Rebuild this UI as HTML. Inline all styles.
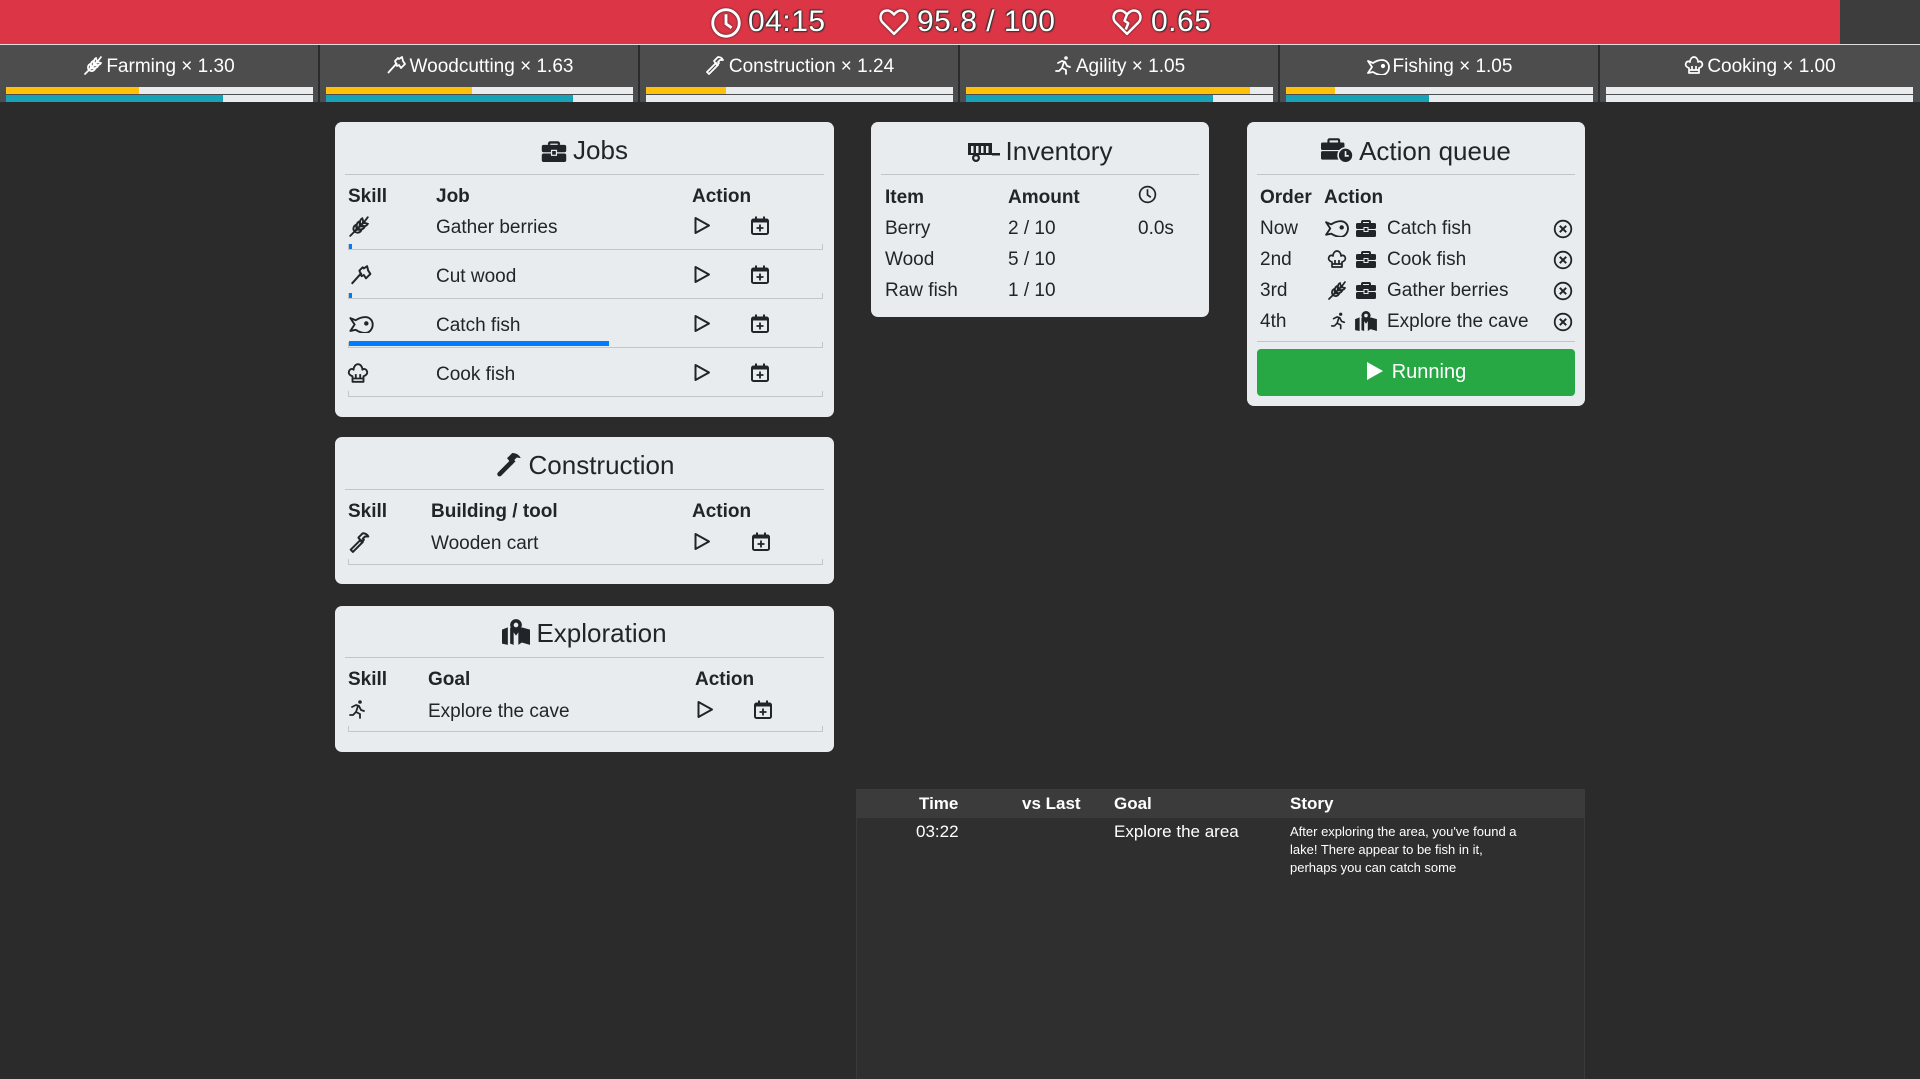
<!DOCTYPE html>
<html><head><meta charset="utf-8">
<style>
*{box-sizing:border-box;margin:0;padding:0}
body{width:1920px;height:1079px;background:#2b2b2b;font-family:"Liberation Sans",sans-serif;color:#212529;position:relative;overflow:hidden}
.abs{position:absolute}
#top{left:0;top:0;width:1840px;height:44px;background:#dc3545}
#topr{left:1840px;top:0;width:80px;height:44px;background:#3d3d3d}
.tt{position:absolute;top:5px;font-size:30px;letter-spacing:0.5px;color:#fff;line-height:34px;text-shadow:0 0 2px #333,1px 1px 1px #333,-1px -1px 1px #333;white-space:nowrap}
.tab{position:absolute;top:45px;width:318px;height:57px;background:#4d4d4d}
.tab .lbl{position:absolute;left:0;right:0;top:10px;text-align:center;color:#fff;font-size:19px;line-height:24px;white-space:nowrap}
.tab .lbl svg{vertical-align:-3px;margin-right:3px}
.bar{position:absolute;left:6px;width:307px;height:7px;background:#e9ecef}
.bar i{position:absolute;left:0;top:0;height:7px}
.card{position:absolute;background:#e9ecef;border-radius:7px}
.ct{position:absolute;left:0;right:0;text-align:center;font-size:26px;line-height:30px;white-space:nowrap}
.ct svg{vertical-align:-3px;margin-right:6px}
.sep{position:absolute;left:10px;right:10px;height:1px;background:#c3c6c9}
.t{position:absolute;font-size:19px;line-height:22px;white-space:nowrap}
.b{font-weight:bold}
.rl{position:absolute;height:6px;border:1px solid #c3c6c9;border-top:none}
.pb{position:absolute;height:5px;background:#007bff}
svg.i{position:absolute}
</style></head><body>
<svg width="0" height="0" style="position:absolute">
<defs>
<symbol id="play" viewBox="0 0 20 20"><path d="M3.5 2.5 L17 10 L3.5 17.5 Z" fill="none" stroke="#212529" stroke-width="2" stroke-linejoin="round"/></symbol>
<symbol id="cal" viewBox="0 0 20 20"><rect x="2" y="4" width="16" height="14.5" rx="1.5" fill="none" stroke="#212529" stroke-width="2"/><rect x="2" y="4" width="16" height="3" fill="#212529"/><rect x="5" y="1" width="2" height="4" fill="#212529"/><rect x="13" y="1" width="2" height="4" fill="#212529"/><path d="M10 9v7M6.5 12.5h7" stroke="#212529" stroke-width="1.8"/></symbol>
<symbol id="wheat" viewBox="0 0 20 20" fill="none" stroke="currentColor" stroke-width="1.7" stroke-linecap="round"><path d="M2 19L15 6"/><path d="M6 15c-2-2-1-5 1-6 1 2 1 5-1 6zM6 15c2 2 5 1 6-1-2-1-5-1-6 1zM9 12c-2-2-1-5 1-6 1 2 1 5-1 6zM9 12c2 2 5 1 6-1-2-1-5-1-6 1zM12 9c-2-2-1-5 1-6 1 2 1 5-1 6zM12 9c2 2 5 1 6-1-2-1-5-1-6 1zM15 6l3-4"/></symbol>
<symbol id="axe" viewBox="0 0 20 20" fill="none" stroke="currentColor" stroke-width="1.8" stroke-linejoin="round"><path d="M2 18L11 8"/><path d="M9 6l3-3 1 1 3-2 1 4 2 3-4 4-2-3-2 1z"/></symbol>
<symbol id="hammer" viewBox="0 0 20 20" fill="none" stroke="currentColor" stroke-width="1.8" stroke-linejoin="round"><path d="M2 17l9-9 2 2-9 9z"/><path d="M9 6l4-4c2 0 4 1 5 3l-3 0-2 2 1 1-2 2z"/></symbol>
<symbol id="hammerf" viewBox="0 0 20 20" fill="currentColor"><path d="M1.5 16.5l9-9 2.5 2.5-9 9c-.7.7-1.8.7-2.5 0s-.7-1.800 0-2.5z"/><path d="M8.5 5.5l4-4c3 0 5.5 1.5 6.5 4l-3 -.5-2 2 1 1-2.5 2.5z"/></symbol>
<symbol id="run" viewBox="0 0 20 20" fill="none" stroke="currentColor" stroke-width="1.8" stroke-linecap="round" stroke-linejoin="round"><circle cx="13" cy="3" r="1.8" fill="currentColor" stroke="none"/><path d="M5 8l4-2 3 1 2 4 3 1"/><path d="M11 7l-2 6 4 2 0 4"/><path d="M9 13l-3 3H3"/></symbol>
<symbol id="fish" viewBox="0 0 24 16" fill="none" stroke="currentColor" stroke-width="1.8" stroke-linejoin="round"><path d="M2 2l4 6-4 6 5-1c3 2 6 3 9 3 4 0 7-4 7-8s-3-7-7-7c-3 0-6 1-9 3z"/><circle cx="17" cy="7" r="1.2" fill="currentColor"/></symbol>
<symbol id="chef" viewBox="0 0 20 20" fill="none" stroke="currentColor" stroke-width="1.7" stroke-linejoin="round"><path d="M5 13c-3-1-4-3-3-5 1-2 3-2 4-1 0-3 2-5 4-5s4 2 4 5c1-1 3-1 4 1 1 2 0 4-3 5v5H5z"/><path d="M5 15h10M8 11v4M12 11v4"/></symbol>
<symbol id="brief" viewBox="0 0 20 18" fill="#212529"><path d="M7 1h6a2 2 0 0 1 2 2v1h-2V3H7v1H5V3a2 2 0 0 1 2-2z"/><rect x="0" y="4" width="20" height="6" rx="1.5"/><rect x="0" y="11" width="20" height="7" rx="1.5"/><rect x="8" y="8.5" width="4" height="4" fill="#212529" stroke="#e9ecef" stroke-width="1"/></symbol>
<symbol id="map" viewBox="0 0 24 22" fill="#212529"><path d="M0 9l5-2v15l-5 -1z"/><path d="M7 7l3 2v13l-3-1z"/><path d="M14 9l3-2 7 2v13l-7-2-3 2z"/><path d="M12 0a5 5 0 0 1 5 5c0 3-5 9-5 9s-5-6-5-9a5 5 0 0 1 5-5z"/><circle cx="12" cy="5" r="2" fill="#e9ecef"/></symbol>
<symbol id="cart" viewBox="0 0 32 22" fill="#212529"><path d="M0 2h24v12H0z"/><rect x="24" y="12" width="8" height="2.5"/><circle cx="8" cy="17" r="4" fill="#212529"/><circle cx="8" cy="17" r="1.8" fill="#e9ecef"/><rect x="3" y="5" width="2.5" height="7" fill="#e9ecef"/><rect x="8" y="5" width="2.5" height="7" fill="#e9ecef"/><rect x="13" y="5" width="2.5" height="7" fill="#e9ecef"/><rect x="18" y="5" width="2.5" height="7" fill="#e9ecef"/></symbol>
<symbol id="tbclock" viewBox="0 0 30 24" fill="#212529"><path d="M8 1h8a2 2 0 0 1 2 2v2h-2V3H8v2H6V3a2 2 0 0 1 2-2z"/><rect x="0" y="5" width="22" height="7" rx="1.5"/><rect x="0" y="13" width="18" height="8" rx="1.5"/><circle cx="23" cy="17" r="7" stroke="#e9ecef" stroke-width="1.5"/><path d="M23 13v4.5h3" stroke="#e9ecef" stroke-width="1.6" fill="none"/></symbol>
<symbol id="xc" viewBox="0 0 20 20" fill="none" stroke="#212529" stroke-width="1.8"><circle cx="10" cy="10" r="8.3"/><path d="M6.8 6.8l6.4 6.4M13.2 6.8l-6.4 6.4" stroke-width="2"/></symbol>
<symbol id="clk" viewBox="0 0 20 20" fill="none" stroke="currentColor" stroke-width="1.8"><circle cx="10" cy="10" r="8.3"/><path d="M10 4.5V10.5l3.5 2.5"/></symbol>
<symbol id="heart" viewBox="0 0 24 22" fill="none" stroke="currentColor" stroke-width="2" stroke-linejoin="round"><path d="M12 20.5L3 11.5C0 8.5 1 3 5 2s6 2 7 3c1-1 3-4 7-3s5 6.5 2 9.5z"/></symbol>
<symbol id="heartc" viewBox="0 0 24 22" fill="none" stroke="currentColor" stroke-width="2" stroke-linejoin="round"><path d="M12 20.5L3 11.5C0 8.5 1 3 5 2s6 2 7 3c1-1 3-4 7-3s5 6.5 2 9.5z"/><path d="M12 5l-2 5 3 2-2 5"/></symbol>
</defs></svg>

<div id="top" class="abs"></div><div id="topr" class="abs"></div>
<div class="abs" style="left:0;top:44px;width:1920px;height:1px;background:#ddd"></div>
<svg class="i" style="left:710px;top:7px;color:#fff;filter:drop-shadow(0 0 1px #222)" width="32" height="32"><use href="#clk"/></svg>
<div class="tt" style="left:748px">04:15</div>
<svg class="i" style="left:879px;top:8px;color:#fff;filter:drop-shadow(0 0 1px #222)" width="30" height="28"><use href="#heart"/></svg>
<div class="tt" style="left:917px">95.8 / 100</div>
<svg class="i" style="left:1112px;top:8px;color:#fff;filter:drop-shadow(0 0 1px #222)" width="30" height="28"><use href="#heartc"/></svg>
<div class="tt" style="left:1151px">0.65</div>

<div class="tab" style="left:0"><div class="lbl"><svg width="20" height="20" style="color:#fff"><use href="#wheat"/></svg>Farming × 1.30</div>
<div class="bar" style="top:42px"><i style="width:133px;background:#ffc107"></i></div><div class="bar" style="top:50px"><i style="width:217px;background:#17a2b8"></i></div></div>
<div class="tab" style="left:320px"><div class="lbl"><svg width="22" height="20" style="color:#fff"><use href="#axe"/></svg>Woodcutting × 1.63</div>
<div class="bar" style="top:42px"><i style="width:146px;background:#ffc107"></i></div><div class="bar" style="top:50px"><i style="width:247px;background:#17a2b8"></i></div></div>
<div class="tab" style="left:640px"><div class="lbl"><svg width="22" height="20" style="color:#fff"><use href="#hammer"/></svg>Construction × 1.24</div>
<div class="bar" style="top:42px"><i style="width:80px;background:#ffc107"></i></div><div class="bar" style="top:50px"></div></div>
<div class="tab" style="left:960px"><div class="lbl"><svg width="20" height="20" style="color:#fff"><use href="#run"/></svg>Agility × 1.05</div>
<div class="bar" style="top:42px"><i style="width:284px;background:#ffc107"></i></div><div class="bar" style="top:50px"><i style="width:247px;background:#17a2b8"></i></div></div>
<div class="tab" style="left:1280px"><div class="lbl"><svg width="24" height="16" style="color:#fff"><use href="#fish"/></svg>Fishing × 1.05</div>
<div class="bar" style="top:42px"><i style="width:49px;background:#ffc107"></i></div><div class="bar" style="top:50px"><i style="width:143px;background:#17a2b8"></i></div></div>
<div class="tab" style="left:1600px;width:320px"><div class="lbl"><svg width="20" height="20" style="color:#fff"><use href="#chef"/></svg>Cooking × 1.00</div>
<div class="bar" style="top:42px"></div><div class="bar" style="top:50px"></div></div>

<!-- Jobs -->
<div class="card" style="left:335px;top:122px;width:499px;height:295px">
<div class="ct" style="top:13px"><svg width="26" height="22"><use href="#brief"/></svg>Jobs</div>
<div class="sep" style="top:52px"></div>
<div class="t b" style="left:13px;top:64px">Skill</div><div class="t b" style="left:101px;top:64px">Job</div><div class="t b" style="left:357px;top:64px">Action</div>
<svg class="i" style="left:13px;top:93px;color:#212529" width="22" height="22"><use href="#wheat"/></svg>
<div class="t" style="left:101px;top:95px">Gather berries</div>
<svg class="i" style="left:357px;top:93px" width="20" height="21"><use href="#play"/></svg><svg class="i" style="left:415px;top:93px" width="20" height="21"><use href="#cal"/></svg>
<div class="rl" style="left:13px;top:122px;width:475px"></div><div class="pb" style="left:14px;top:122px;width:3px"></div>
<svg class="i" style="left:13px;top:142px;color:#212529" width="25" height="22"><use href="#axe"/></svg>
<div class="t" style="left:101px;top:144px">Cut wood</div>
<svg class="i" style="left:357px;top:142px" width="20" height="21"><use href="#play"/></svg><svg class="i" style="left:415px;top:142px" width="20" height="21"><use href="#cal"/></svg>
<div class="rl" style="left:13px;top:171px;width:475px"></div><div class="pb" style="left:14px;top:171px;width:3px"></div>
<svg class="i" style="left:13px;top:194px;color:#212529" width="26" height="17"><use href="#fish"/></svg>
<div class="t" style="left:101px;top:193px">Catch fish</div>
<svg class="i" style="left:357px;top:191px" width="20" height="21"><use href="#play"/></svg><svg class="i" style="left:415px;top:191px" width="20" height="21"><use href="#cal"/></svg>
<div class="rl" style="left:13px;top:220px;width:475px"></div><div class="pb" style="left:14px;top:219px;width:260px"></div>
<svg class="i" style="left:12px;top:240px;color:#212529" width="22" height="22"><use href="#chef"/></svg>
<div class="t" style="left:101px;top:242px">Cook fish</div>
<svg class="i" style="left:357px;top:240px" width="20" height="21"><use href="#play"/></svg><svg class="i" style="left:415px;top:240px" width="20" height="21"><use href="#cal"/></svg>
<div class="rl" style="left:13px;top:269px;width:475px"></div>
</div>

<!-- Construction -->
<div class="card" style="left:335px;top:437px;width:499px;height:147px">
<div class="ct" style="top:13px"><svg width="28" height="26" style="color:#212529"><use href="#hammerf"/></svg>Construction</div>
<div class="sep" style="top:52px"></div>
<div class="t b" style="left:13px;top:64px">Skill</div><div class="t b" style="left:96px;top:64px">Building / tool</div><div class="t b" style="left:357px;top:64px">Action</div>
<svg class="i" style="left:13px;top:94px;color:#212529" width="23" height="22"><use href="#hammer"/></svg>
<div class="t" style="left:96px;top:96px">Wooden cart</div>
<svg class="i" style="left:357px;top:94px" width="20" height="21"><use href="#play"/></svg><svg class="i" style="left:416px;top:94px" width="20" height="21"><use href="#cal"/></svg>
<div class="rl" style="left:13px;top:122px;width:475px"></div>
</div>

<!-- Exploration -->
<div class="card" style="left:335px;top:606px;width:499px;height:146px">
<div class="ct" style="top:12px"><svg width="28" height="26"><use href="#map"/></svg>Exploration</div>
<div class="sep" style="top:51px"></div>
<div class="t b" style="left:13px;top:63px">Skill</div><div class="t b" style="left:93px;top:63px">Goal</div><div class="t b" style="left:360px;top:63px">Action</div>
<svg class="i" style="left:12px;top:93px;color:#212529" width="20" height="20"><use href="#run"/></svg>
<div class="t" style="left:93px;top:95px">Explore the cave</div>
<svg class="i" style="left:360px;top:93px" width="20" height="21"><use href="#play"/></svg><svg class="i" style="left:418px;top:93px" width="20" height="21"><use href="#cal"/></svg>
<div class="rl" style="left:13px;top:120px;width:475px"></div>
</div>

<!-- Inventory -->
<div class="card" style="left:871px;top:122px;width:338px;height:195px">
<div class="ct" style="top:14px"><svg width="32" height="22"><use href="#cart"/></svg>Inventory</div>
<div class="sep" style="top:52px"></div>
<div class="t b" style="left:14px;top:65px">Item</div><div class="t b" style="left:137px;top:65px">Amount</div>
<svg class="i" style="left:267px;top:63px;color:#212529" width="19" height="19"><use href="#clk"/></svg>
<div class="t" style="left:14px;top:96px">Berry</div><div class="t" style="left:137px;top:96px">2 / 10</div><div class="t" style="left:267px;top:96px">0.0s</div>
<div class="t" style="left:14px;top:127px">Wood</div><div class="t" style="left:137px;top:127px">5 / 10</div>
<div class="t" style="left:14px;top:158px">Raw fish</div><div class="t" style="left:137px;top:158px">1 / 10</div>
</div>

<!-- Action queue -->
<div class="card" style="left:1247px;top:122px;width:338px;height:284px">
<div class="ct" style="top:14px"><svg width="32" height="26"><use href="#tbclock"/></svg>Action queue</div>
<div class="sep" style="top:52px"></div>
<div class="t b" style="left:13px;top:65px">Order</div><div class="t b" style="left:77px;top:65px">Action</div>
<div class="t" style="left:13px;top:96px">Now</div><svg class="i" style="left:77px;top:98px;color:#212529" width="25" height="17"><use href="#fish"/></svg><svg class="i" style="left:109px;top:97px" width="20" height="18"><use href="#brief"/></svg><div class="t" style="left:140px;top:96px">Catch fish</div>
<svg class="i" style="left:306px;top:97px" width="20" height="20"><use href="#xc"/></svg>
<div class="t" style="left:13px;top:127px">2nd</div><svg class="i" style="left:80px;top:127px;color:#212529" width="20" height="20"><use href="#chef"/></svg><svg class="i" style="left:109px;top:128px" width="20" height="18"><use href="#brief"/></svg><div class="t" style="left:140px;top:127px">Cook fish</div>
<svg class="i" style="left:306px;top:128px" width="20" height="20"><use href="#xc"/></svg>
<div class="t" style="left:13px;top:158px">3rd</div><svg class="i" style="left:80px;top:158px;color:#212529" width="20" height="20"><use href="#wheat"/></svg><svg class="i" style="left:109px;top:159px" width="20" height="18"><use href="#brief"/></svg><div class="t" style="left:140px;top:158px">Gather berries</div>
<svg class="i" style="left:306px;top:159px" width="20" height="20"><use href="#xc"/></svg>
<div class="t" style="left:13px;top:189px">4th</div><svg class="i" style="left:82px;top:189px;color:#212529" width="18" height="19"><use href="#run"/></svg><svg class="i" style="left:108px;top:189px" width="22" height="20"><use href="#map"/></svg><div class="t" style="left:140px;top:189px">Explore the cave</div>
<svg class="i" style="left:306px;top:190px" width="20" height="20"><use href="#xc"/></svg>
<div class="sep" style="top:219px"></div>
<div style="position:absolute;left:10px;top:227px;width:318px;height:47px;background:#28a745;border-radius:4px;color:#fff;font-size:20px;line-height:47px;text-align:center"><svg width="18" height="20" style="vertical-align:-3px;margin-right:8px"><path d="M1 1L17 10 1 19z" fill="#fff"/></svg>Running</div>
</div>

<!-- Story -->
<div class="abs" style="left:856px;top:789px;width:729px;height:290px;background:#2f2f2f;border-left:1px solid #3a3a3a;border-right:1px solid #3a3a3a"></div>
<div class="abs" style="left:856px;top:789px;width:729px;height:29px;background:#3b3b3b"></div>
<div class="t b" style="left:919px;top:793px;color:#fff;font-size:17px">Time</div>
<div class="t b" style="left:1022px;top:793px;color:#fff;font-size:17px">vs Last</div>
<div class="t b" style="left:1114px;top:793px;color:#fff;font-size:17px">Goal</div>
<div class="t b" style="left:1290px;top:793px;color:#fff;font-size:17px">Story</div>
<div class="t" style="left:916px;top:821px;color:#fff;font-size:17px">03:22</div>
<div class="t" style="left:1114px;top:821px;color:#fff;font-size:17px">Explore the area</div>
<div class="abs" style="left:1290px;top:823px;width:300px;color:#fff;font-size:13px;line-height:18px;white-space:nowrap">After exploring the area, you've found a<br>lake! There appear to be fish in it,<br>perhaps you can catch some</div>
</body></html>
